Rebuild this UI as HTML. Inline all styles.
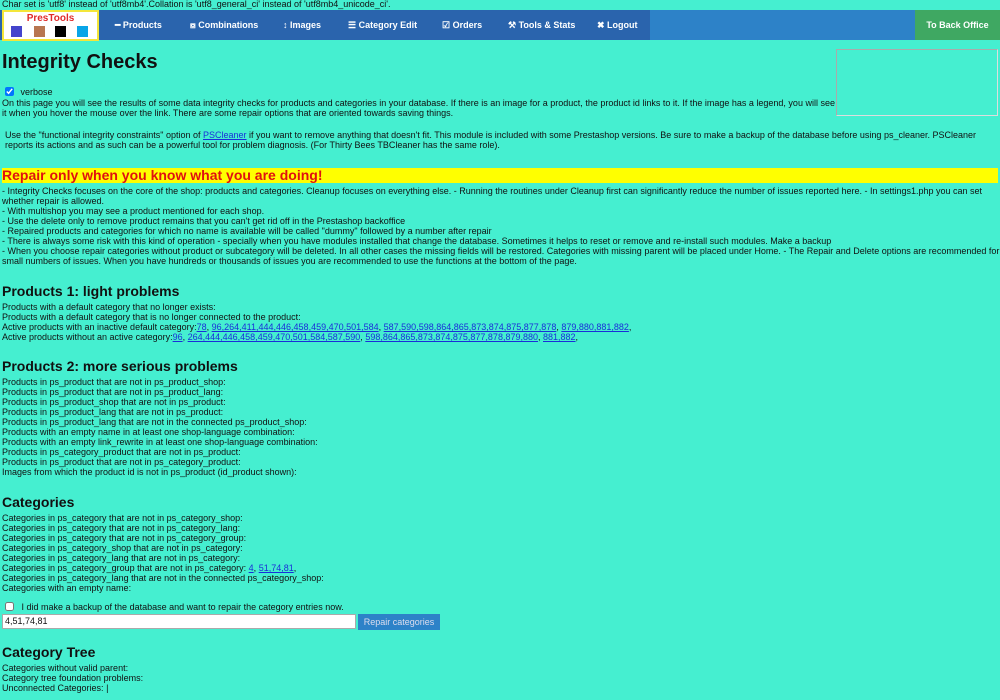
<!DOCTYPE html>
<html><head><meta charset="utf-8"><style>
body{margin:0;width:1000px;height:700px;overflow:hidden;background:#45efd0;font-family:"Liberation Sans",sans-serif;font-size:9px;color:#111;position:relative}
.a{position:absolute;left:2px;white-space:nowrap;line-height:10px}
a{color:#1a2fd8}
.nav{position:absolute;top:10px;left:0;width:1000px;height:30px;background:#2d82c8}
.dk{position:absolute;left:0;top:0;width:650px;height:30px;background:#2a64ad}
.gr{position:absolute;left:915px;top:0;width:85px;height:30px;background:#3fa862;color:#fff;font-weight:bold;text-align:center;line-height:30px}
.ni{position:absolute;top:0;line-height:30px;color:#fff;font-weight:bold}
.logo{position:absolute;left:2px;top:0;width:93px;height:27px;background:#fff;border:2px solid #f4e63a}
.sq{position:absolute;top:14px;width:11px;height:11px}
h2{position:absolute;left:2px;margin:0;font-size:14px;font-weight:bold;line-height:16px}
</style></head><body>
<div class="a" style="top:-1px">Char set is 'utf8' instead of 'utf8mb4'.Collation is 'utf8_general_ci' instead of 'utf8mb4_unicode_ci'.</div>
<div class="nav"><div class="dk"></div>
<div class="logo"><div style="position:absolute;top:1px;width:93px;text-align:center;color:#e02a2a;font-weight:bold;font-size:10px">PresTools</div>
<div class="sq" style="left:7px;background:#4444cc"></div><div class="sq" style="left:30px;background:#b87650"></div><div class="sq" style="left:51px;background:#000"></div><div class="sq" style="left:73px;background:#08a5e8"></div></div>
<div class="ni" style="left:115px">━ Products</div>
<div class="ni" style="left:190px">⧇ Combinations</div>
<div class="ni" style="left:283px">↕ Images</div>
<div class="ni" style="left:348px">☰ Category Edit</div>
<div class="ni" style="left:442px">☑ Orders</div>
<div class="ni" style="left:508px">⚒ Tools &amp; Stats</div>
<div class="ni" style="left:597px">✖ Logout</div>
<div class="gr">To Back Office</div></div>
<div style="position:absolute;left:836px;top:49px;width:160px;height:65px;border:1px solid #aaa;border-right-color:#ddd;border-bottom-color:#ddd"></div>
<div style="position:absolute;left:2px;top:51px;font-size:20px;font-weight:bold">Integrity Checks</div>
<div class="a" style="top:87px"><input type="checkbox" checked style="margin:0 4px 0 3px;width:9px;height:9px;vertical-align:-1px"> verbose</div>
<div class="a" style="top:98px">On this page you will see the results of some data integrity checks for products and categories in your database. If there is an image for a product, the product id links to it. If the image has a legend, you will see<br>it when you hover the mouse over the link. There are some repair options that are oriented towards saving things.</div>
<div class="a" style="top:130px;left:5px">Use the "functional integrity constraints" option of <a href="#">PSCleaner</a> if you want to remove anything that doesn't fit. This module is included with some Prestashop versions. Be sure to make a backup of the database before using ps_cleaner. PSCleaner<br>reports its actions and as such can be a powerful tool for problem diagnosis. (For Thirty Bees TBCleaner has the same role).</div>
<div style="position:absolute;left:2px;top:168px;width:996px;height:15px;background:#ffff00;color:#e01010;font-weight:bold;font-size:14px;line-height:15px">Repair only when you know what you are doing!</div>
<div class="a" style="top:186px">- Integrity Checks focuses on the core of the shop: products and categories. Cleanup focuses on everything else. - Running the routines under Cleanup first can significantly reduce the number of issues reported here. - In settings1.php you can set<br>whether repair is allowed.<br>- With multishop you may see a product mentioned for each shop.<br>- Use the delete only to remove product remains that you can't get rid off in the Prestashop backoffice<br>- Repaired products and categories for which no name is available will be called "dummy" followed by a number after repair<br>- There is always some risk with this kind of operation - specially when you have modules installed that change the database. Sometimes it helps to reset or remove and re-install such modules. Make a backup<br>- When you choose repair categories without product or subcategory will be deleted. In all other cases the missing fields will be restored. Categories with missing parent will be placed under Home. - The Repair and Delete options are recommended for<br>small numbers of issues. When you have hundreds or thousands of issues you are recommended to use the functions at the bottom of the page.</div>
<h2 style="top:283px">Products 1: light problems</h2>
<div class="a" style="top:302px">Products with a default category that no longer exists:<br>Products with a default category that is no longer connected to the product:<br>Active products with an inactive default category:<a href="#">78</a>, <a href="#">96,264,411,444,446,458,459,470,501,584</a>, <a href="#">587,590,598,864,865,873,874,875,877,878</a>, <a href="#">879,880,881,882</a>,<br>Active products without an active category:<a href="#">96</a>, <a href="#">264,444,446,458,459,470,501,584,587,590</a>, <a href="#">598,864,865,873,874,875,877,878,879,880</a>, <a href="#">881,882</a>,</div>
<h2 style="top:358px">Products 2: more serious problems</h2>
<div class="a" style="top:377px">Products in ps_product that are not in ps_product_shop:<br>Products in ps_product that are not in ps_product_lang:<br>Products in ps_product_shop that are not in ps_product:<br>Products in ps_product_lang that are not in ps_product:<br>Products in ps_product_lang that are not in the connected ps_product_shop:<br>Products with an empty name in at least one shop-language combination:<br>Products with an empty link_rewrite in at least one shop-language combination:<br>Products in ps_category_product that are not in ps_product:<br>Products in ps_product that are not in ps_category_product:<br>Images from which the product id is not in ps_product (id_product shown):</div>
<h2 style="top:494px">Categories</h2>
<div class="a" style="top:513px">Categories in ps_category that are not in ps_category_shop:<br>Categories in ps_category that are not in ps_category_lang:<br>Categories in ps_category that are not in ps_category_group:<br>Categories in ps_category_shop that are not in ps_category:<br>Categories in ps_category_lang that are not in ps_category:<br>Categories in ps_category_group that are not in ps_category: <a href="#">4</a>, <a href="#">51,74,81</a>,<br>Categories in ps_category_lang that are not in the connected ps_category_shop:<br>Categories with an empty name:</div>
<div class="a" style="top:602px"><input type="checkbox" style="margin:0 5px 0 3px;width:9px;height:9px;vertical-align:-1px"> I did make a backup of the database and want to repair the category entries now.</div>
<div style="position:absolute;left:2px;top:614px;width:350px;height:13px;background:#fff;border:1px solid #aaa;line-height:13px;padding-left:2px">4,51,74,81</div>
<div style="position:absolute;left:358px;top:614px;width:82px;height:16px;background:#2d82c8;color:#dde;line-height:16px;text-align:center">Repair categories</div>
<h2 style="top:644px">Category Tree</h2>
<div class="a" style="top:663px">Categories without valid parent:<br>Category tree foundation problems:<br>Unconnected Categories: |</div>
</body></html>
